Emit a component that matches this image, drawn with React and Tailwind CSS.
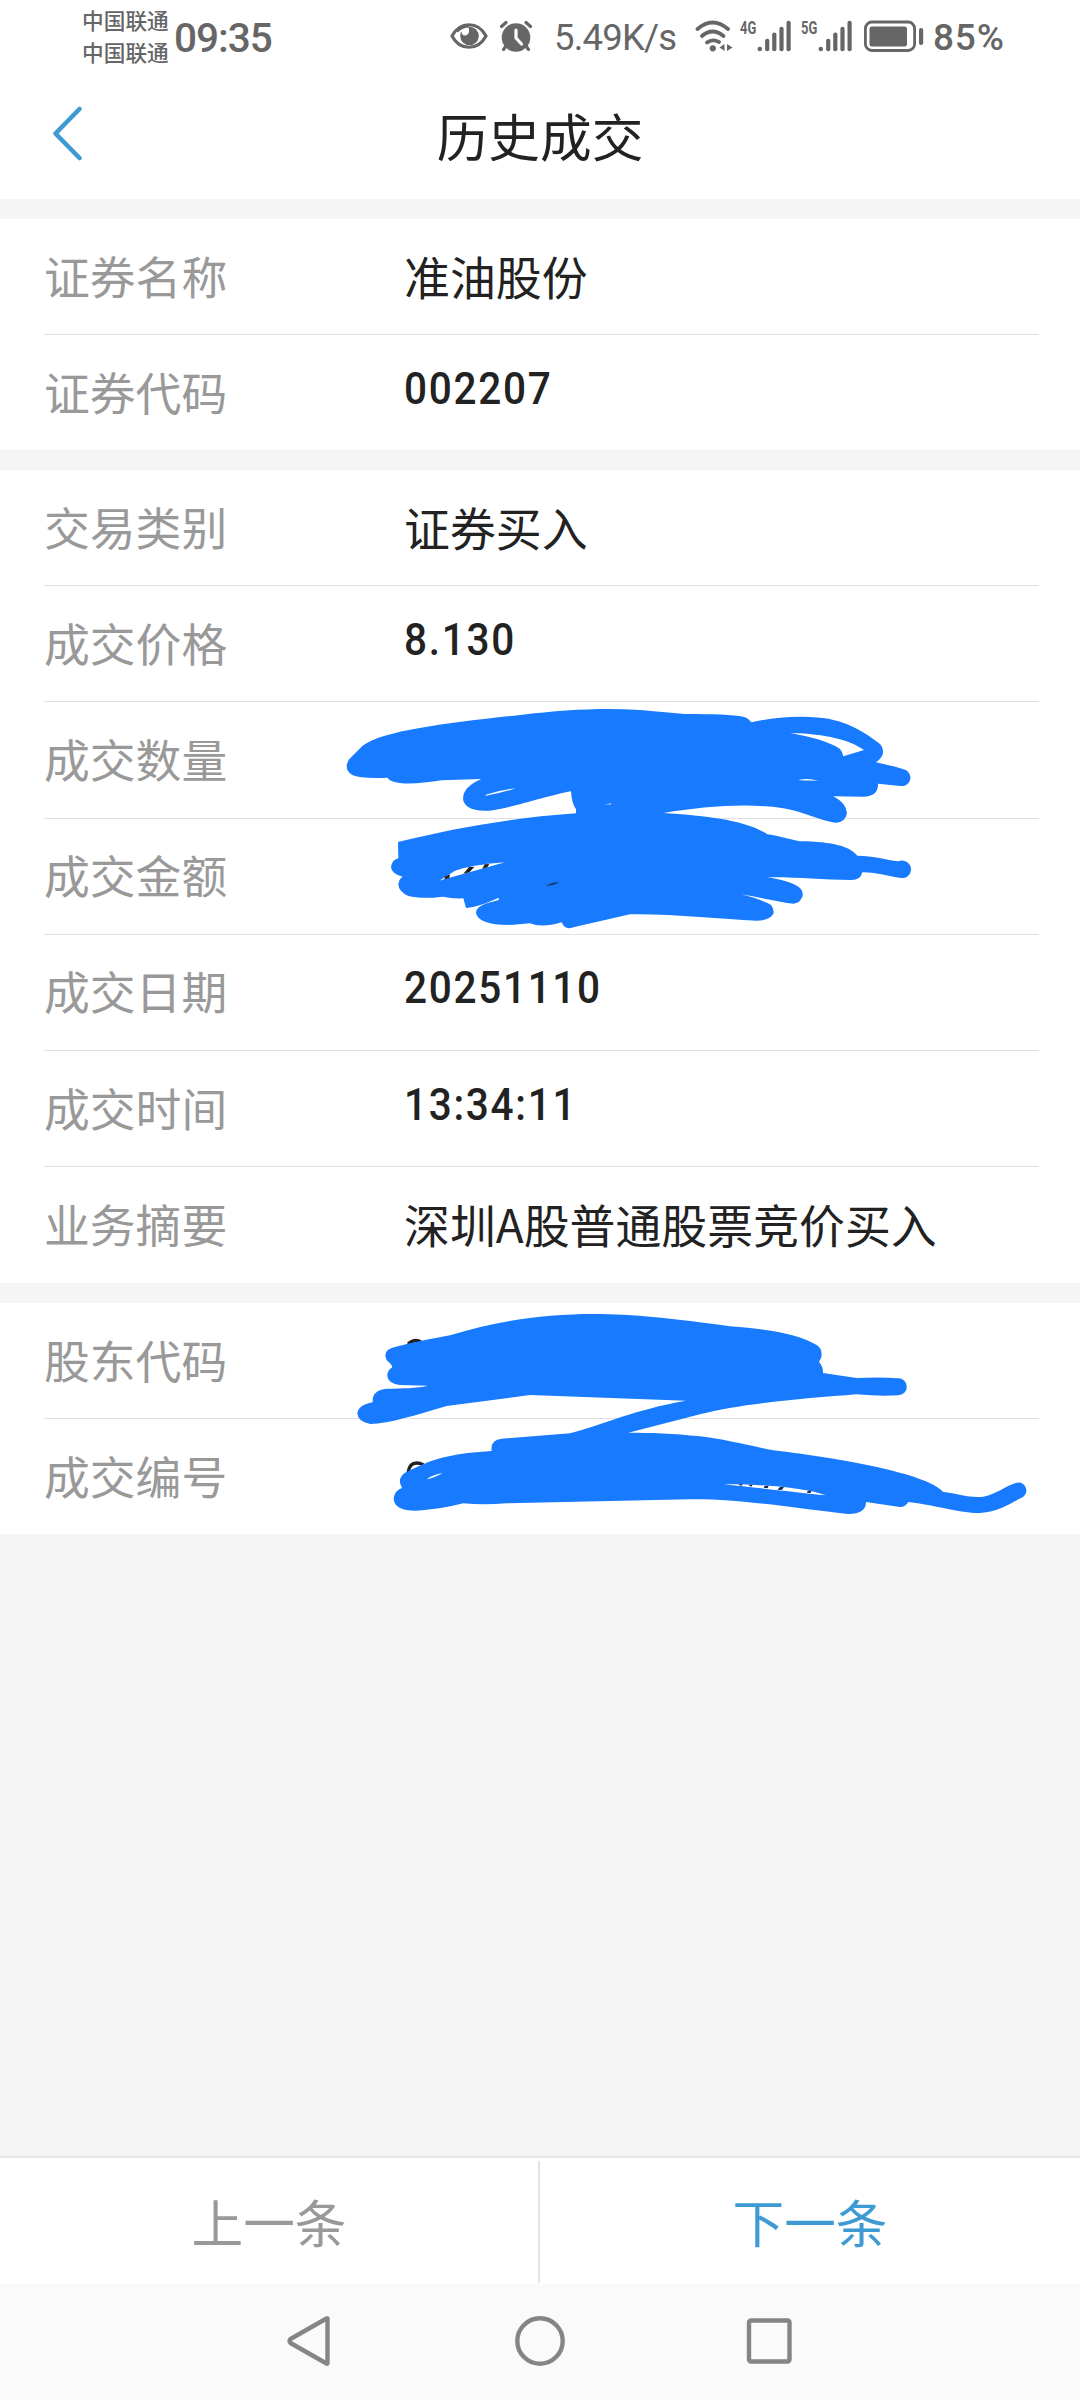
import React from "react";

const CJK = "font-['Noto_Sans_CJK_SC',sans-serif]";
const NUM = "font-['Roboto','Noto_Sans_CJK_SC',sans-serif]";

function Signal({ label }) {
  return (
    <div className="relative h-[36px] w-[50px]">
      <svg width="50" height="36" viewBox="0 0 50 36" className="block" fill="#666">
        <circle cx="18.800" cy="30" r="2.300" />
        <rect x="24.100" y="19.800" width="4.200" height="12.400" rx="2" />
        <rect x="31.200" y="13.600" width="4.200" height="18.600" rx="2" />
        <rect x="38.400" y="7.800" width="4.200" height="24.400" rx="2" />
        <rect x="45.500" y="1.800" width="4.200" height="30.400" rx="2" />
      </svg>
      <span className="absolute left-[-1px] top-[-3px] origin-left scale-x-[0.72] whitespace-nowrap text-[18px] leading-[24px] font-bold font-['Roboto',sans-serif]">{label}</span>
    </div>
  );
}

function StatusBar() {
  return (
    <div className={`flex h-[74px] items-start text-[#666] ${NUM}`}>
      <div className={`ml-[82px] mt-[4px] flex w-[88px] flex-col text-[21.7px] leading-[32px] font-medium ${CJK}`}>
        <span>中国联通</span>
        <span>中国联通</span>
      </div>
      <span className="ml-[4px] mt-[18px] w-[100px] text-[40.5px] leading-[40px] font-medium tracking-[-1px]">09:35</span>
      <svg width="38" height="28" viewBox="0 0 38 28" className="ml-[176px] mt-[22px] block shrink-0">
        <path d="M2 14C10-1 28-1 36 14C28 29 10 29 2 14Z" fill="none" stroke="#666" strokeWidth="3.2" />
        <circle cx="19.500" cy="14" r="9.300" fill="#666" />
        <path d="M9.500 8Q13 3 18.500 4.500Q20.500 12 15.500 13.500Q12 14 11.500 9.500Z" fill="#fff" />
        <path d="M7 9.500Q12 4.300 19 4.200" stroke="#666" strokeWidth="2.600" fill="none" />
      </svg>
      <svg width="34" height="32" viewBox="0 0 34 32" className="ml-[11px] mt-[20px] block shrink-0">
        <circle cx="17" cy="17.500" r="14.300" fill="#666" />
        <path d="M2.500 6.500L7 2.500M31.500 6.500L27 2.500M7 26L4.500 29.500M27 26L29.500 29.500" stroke="#666" strokeWidth="3.200" strokeLinecap="round" />
        <path d="M17 10V18L22.500 24" fill="none" stroke="#fff" strokeWidth="3.200" strokeLinecap="round" strokeLinejoin="round" />
      </svg>
      <span className="ml-[21px] mt-[18px] w-[124px] whitespace-nowrap text-[36.5px] leading-[40px] tracking-[-0.8px]">5.49K/s</span>
      <svg width="40" height="34" viewBox="0 0 40 34" className="ml-[17px] mt-[19px] block shrink-0">
        <g fill="none" stroke="#666" strokeWidth="3.800" strokeLinecap="round">
          <path d="M2.500 10Q17.500 -3 33 10" />
          <path d="M7 17Q17.500 8 28.500 17" />
          <path d="M12 23.500Q17.500 19.500 24 23" />
        </g>
        <circle cx="17.800" cy="29.300" r="3.100" fill="#666" />
        <path d="M29.500 25V32L24.500 28.500ZM32 25V32L37.500 28.500Z" fill="#666" />
      </svg>
      <div className="ml-[6px] mt-[19px] shrink-0"><Signal label="4G" /></div>
      <div className="ml-[11px] mt-[19px] shrink-0"><Signal label="5G" /></div>
      <svg width="62" height="34" viewBox="0 0 62 34" className="ml-[11px] mt-[19px] block shrink-0">
        <rect x="2.400" y="3" width="49.200" height="28.500" rx="6.500" fill="none" stroke="#666" strokeWidth="2.800" />
        <rect x="6.500" y="7.500" width="37.500" height="20" rx="2.500" fill="#666" />
        <rect x="56" y="9" width="4.200" height="17" rx="2" fill="#666" />
      </svg>
      <span className="ml-[8px] mt-[18px] text-[37px] leading-[40px] font-medium tracking-[0.8px]">85%</span>
    </div>
  );
}

function Header() {
  return (
    <header className="flex h-[125px] items-start">
      <svg width="34" height="60" viewBox="0 0 34 60" className="ml-[50px] mt-[30px] block shrink-0">
        <path d="M29.500 5L5.500 29.500L29.500 54" fill="none" stroke="#3e9ad3" strokeWidth="4.600" strokeLinecap="round" strokeLinejoin="round" />
      </svg>
      <h1 className={`mr-[84px] mt-[21px] flex-1 text-center text-[51.7px] leading-[80px] text-[#222] ${CJK}`}>历史成交</h1>
    </header>
  );
}

function Row({ label, value, numeric, last }) {
  return (
    <div className="pl-[44px] pr-[41px]">
      <div className={`flex h-[116.2px] items-center ${last ? "" : "border-b-[1px] border-[#e0e0e0]"}`}>
        <span className={`relative top-[-2px] w-[360px] text-[45.8px] leading-[60px] text-[#999] ${CJK}`}>{label}</span>
        {numeric ? (
          <span className="relative top-[-4px] origin-left scale-x-[0.9] text-[45px] leading-[60px] font-medium tracking-[1.9px] text-[#222] font-['Roboto',sans-serif]">{value}</span>
        ) : (
          <span className={`relative top-[-2px] whitespace-nowrap text-[45.9px] leading-[60px] text-[#222] ${CJK}`}>{value}</span>
        )}
      </div>
    </div>
  );
}

/* Pen marks over quantity and amount */
function TradeMarks() {
  return (
    <svg width="620" height="250" viewBox="0 0 1860 750" className="absolute left-[320px] top-[220px]">
      <path fill="#187bff" d="M80 227Q82 210 92 203L127 168C190 120 400 97 600 75C740 58 850 53 960 60L1095 72C1180 72 1240 74 1270 80Q1285 84 1294 97C1350 84 1420 76 1500 83C1580 90 1640 130 1680 162Q1690 172 1689 190Q1684 207 1668 217C1700 225 1730 230 1750 238A25 25 0 0 1 1742 288L1674 281Q1676 318 1630 320L1540 319Q1580 340 1581 370Q1575 400 1545 398C1500 392 1450 365 1390 355C1280 338 1150 350 1031 369C1150 376 1280 390 1342 433C1370 437 1410 448 1440 454C1540 455 1590 470 1612 497C1660 497 1700 510 1735 514Q1742 511 1750 512A26 26 0 0 1 1744 564C1700 558 1660 546 1627 547Q1622 570 1595 570C1500 570 1440 561 1342 562C1380 568 1420 578 1437 592Q1450 602 1448 618Q1440 640 1420 641C1370 635 1320 622 1262 613C1300 622 1340 635 1353 645Q1362 655 1361 670Q1350 692 1310 692C1200 688 1060 671 930 673L760 712Q735 722 725 697Q665 715 630 700C580 706 530 708 495 695Q470 685 468 668C470 645 500 640 536 630L536 623C500 640 470 650 438 654L430 625Q400 627 368 620C320 626 290 624 265 618Q236 605 235 583Q237 567 248 560Q215 552 213 532Q215 510 235 505L234 456C400 415 560 385 768 370L768 358Q755 340 753 304C700 313 600 345 540 357C470 372 430 355 429 325Q430 290 484 267L365 271C290 283 220 287 202 263Q120 266 97 255Q80 245 80 227Z" />
      <g fill="#fff">
        <path d="M497 314Q540 300 587 295Q540 310 497 317Z" />
        <path d="M1411 129C1520 132 1590 150 1632 180L1570 199Q1567 185 1560 177C1530 155 1470 140 1411 129Z" />
        <path d="M1434 271Q1460 263 1495 272Z" />
        <path d="M855 344L873 340L873 343Z" />
        <path d="M358 572L405 542Q470 522 555 517Q430 552 358 572Z" />
      </g>
      <path fill="#222" d="M374 568V560L390 553L388 564ZM430 551L447 531H463L448 547ZM487 536L494 523L508 522L502 532Z" />
      <path fill="#143a70" d="M678 588Q690 578 718 576Q705 586 678 588Z" />
    </svg>
  );
}

/* Pen marks over holder code and deal number */
function AccountMarks() {
  return (
    <svg width="710" height="240" viewBox="0 0 2130 720" className="absolute left-[340px] top-[-13px]">
      <path d="M204 162Q225 144 244 157M204 548Q208 519 230 519Q240 519 250 524" fill="none" stroke="#222" strokeWidth="10" />
      <path fill="#187bff" d="M136 195Q137 180 155 174Q200 160 330 136C480 90 620 72 760 72C880 72 1000 85 1170 109C1300 118 1380 135 1430 165Q1450 178 1443 205L1437 215Q1450 230 1449 249L1550 264Q1620 260 1675 265A25 25 0 0 1 1675 316Q1620 320 1550 313C1400 325 1200 340 1080 373L865 428C930 428 1000 430 1080 439C1150 447 1220 465 1300 481C1500 505 1760 550 1810 606C1850 610 1890 625 1930 620C1970 612 2000 585 2030 578A24 24 0 0 1 2050 620C2010 640 1980 665 1920 669C1860 670 1800 648 1705 636Q1695 652 1680 651L1578 636Q1578 672 1525 672C1400 660 1200 625 1050 628L500 640Q430 646 370 640C310 655 240 665 205 661Q162 655 161 625Q165 600 186 594Q178 580 180 568Q185 550 210 541C290 500 350 490 455 483Q450 450 485 446L690 430C800 400 880 360 1037 332L570 315L320 348C230 375 150 400 90 402Q53 395 52 370Q55 345 98 337Q95 300 140 296C190 295 230 295 263 287L180 285Q142 280 142 255Q143 240 157 232Q155 225 150 220Q136 210 136 195Z" />
      <path fill="#fff" d="M262 566Q280 554 308 549Q290 560 262 568ZM1150 583C1250 581 1400 593 1457 616C1380 608 1250 593 1150 583Z" />
      <path fill="#142a50" d="M1194 583H1208L1204 588ZM1224 584H1238L1234 590ZM1271 593L1274 587H1286L1283 595ZM1312 599L1320 591H1332L1325 600ZM1401 608L1403 602H1414L1412 609Z" />
    </svg>
  );
}

function Footer() {
  return (
    <footer className={`flex h-[128px] items-start border-t-[2px] border-[#e6e6e6] bg-white text-[51.7px] leading-[80px] ${CJK}`}>
      <button className="mt-[23px] h-[80px] w-[538px] text-[#999]">上一条</button>
      <div className="mt-[3px] h-[122px] w-[2px] bg-[#e4e4e4]" />
      <button className="mt-[23px] h-[80px] w-[540px] text-[#3e9ad3]">下一条</button>
    </footer>
  );
}

function NavBar() {
  return (
    <nav className="flex h-[116px] bg-[#fafafa] pl-[284px] pt-[29px]">
      <svg width="50" height="56" viewBox="0 0 50 56" fill="none" stroke="#858585" strokeWidth="4.400" strokeLinejoin="round">
        <path d="M43.500 5.500V50.500Q43 51 42.500 50.500L6.500 30Q4.500 28 6.500 26L42.500 5.500Z" />
      </svg>
      <svg width="56" height="56" viewBox="0 0 56 56" className="ml-[178px]" fill="none" stroke="#858585" strokeWidth="4.400">
        <circle cx="28" cy="28" r="22.700" />
      </svg>
      <svg width="50" height="56" viewBox="0 0 50 56" className="ml-[176px]" fill="none" stroke="#858585" strokeWidth="4.400">
        <rect x="5" y="7.500" width="40.500" height="41" rx="2" />
      </svg>
    </nav>
  );
}

export default function App() {
  return (
    <div className="flex h-[2400px] w-[1080px] flex-col overflow-hidden bg-[#f5f5f5]">
      <div className="bg-white">
        <StatusBar />
        <Header />
      </div>
      <section className="mt-[20px] h-[231px] bg-white">
        <Row label="证券名称" value="准油股份" />
        <Row label="证券代码" value="002207" numeric last />
      </section>
      <section className="relative mt-[20px] h-[813px] bg-white">
        <Row label="交易类别" value="证券买入" />
        <Row label="成交价格" value="8.130" numeric />
        <Row label="成交数量" value="" />
        <Row label="成交金额" value="" />
        <Row label="成交日期" value="20251110" numeric />
        <Row label="成交时间" value="13:34:11" numeric />
        <Row label="业务摘要" value="深圳A股普通股票竞价买入" last />
        <TradeMarks />
      </section>
      <section className="relative mt-[20px] h-[231px] bg-white">
        <Row label="股东代码" value="" />
        <Row label="成交编号" value="" last />
        <AccountMarks />
      </section>
      <div className="mt-auto">
        <Footer />
        <NavBar />
      </div>
    </div>
  );
}
